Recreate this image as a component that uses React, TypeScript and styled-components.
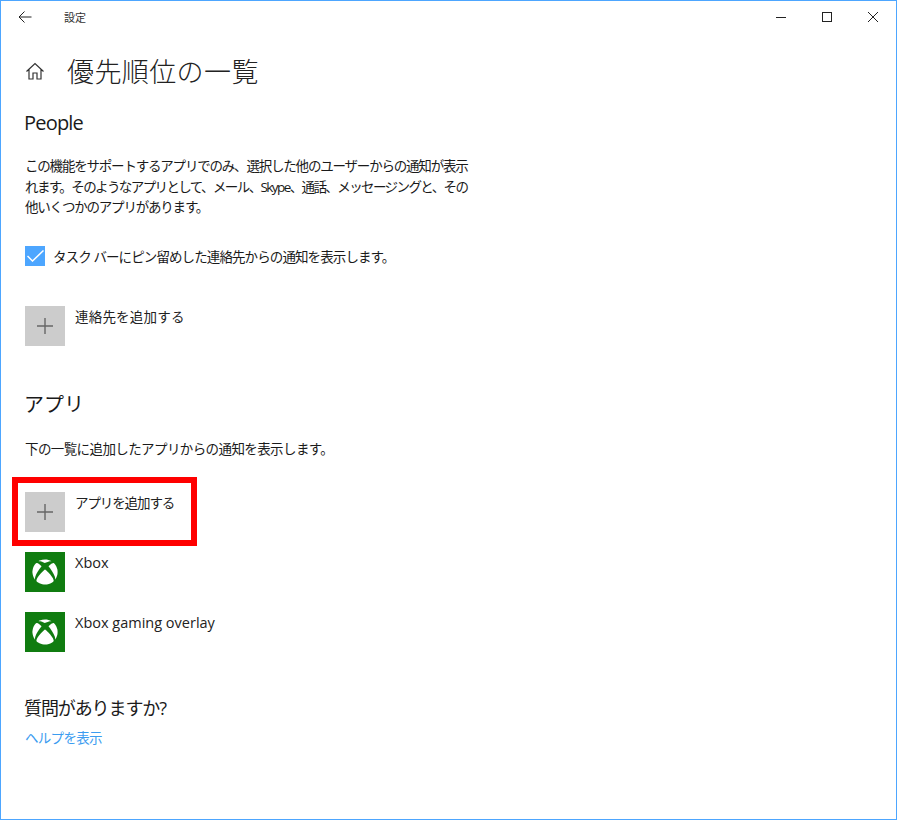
import React from "react";
import styled, {createGlobalStyle} from "styled-components";
import {FaXbox} from "react-icons/fa";

const GlobalStyle = createGlobalStyle`
  html, body {
    margin: 0;
    padding: 0;
    background: #fff;
  }
  body {
    font-family: "Open Sans", "Noto Sans CJK JP", sans-serif;
    color: #1a1a1a;
  }
`
const Window = styled.div`
  box-sizing: border-box;
  width: 897px;
  height: 820px;
  border: 1px solid #4da6ff;
  overflow: hidden;
  display: flex;
  flex-direction: column;
`
const TitleBar = styled.div`
  height: 31px;
  display: flex;
  align-items: center;
  flex-shrink: 0;
`
const BackButton = styled.div`
  width: 48px;
  display: flex;
  justify-content: center;
`
const TitleText = styled.span`
  margin-left: 15px;
  font-size: 11px;
  color: #333;
`
const WindowControls = styled.div`
  margin-left: auto;
  display: flex;
  align-items: center;
`
const ControlButton = styled.div`
  width: 46px;
  display: flex;
  justify-content: center;
  align-items: center;
`
const Content = styled.div`
  padding: 0 0 0 24px;
  display: flex;
  flex-direction: column;
`
const PageHeader = styled.div`
  display: flex;
  align-items: center;
  margin-top: 17px;
  height: 44px;
`
const PageTitle = styled.h1`
  margin: -2px 0 0 22px;
  font-size: 27px;
  font-weight: 300;
  color: #222;
  font-family: "Noto Sans CJK JP", sans-serif;
  letter-spacing: 0.4px;
`
const SectionTitle = styled.h2<{$top: number; $size?: number; $spacing?: number}>`
  margin: ${p => p.$top}px 0 0 -1px;
  font-size: ${p => p.$size ?? 20}px;
  letter-spacing: ${p => p.$spacing ?? 0}px;
  line-height: 28px;
  font-weight: 400;
  color: #1a1a1a;
`
const Description = styled.div<{$top: number}>`
  margin-top: ${p => p.$top}px;
  white-space: nowrap;
  font-size: 13.5px;
  line-height: 20.5px;
  color: #1a1a1a;
`
const DescriptionLine = styled.div<{$spacing: number}>`
  letter-spacing: ${p => p.$spacing}px;
`
const CheckRow = styled.label`
  margin-top: 28px;
  display: flex;
  align-items: center;
  gap: 8px;
  font-size: 13.5px;
  letter-spacing: -0.9px;
  height: 20px;
`
const CheckBox = styled.span`
  width: 20px;
  height: 20px;
  background: #4da6ff;
  display: flex;
  align-items: center;
  justify-content: center;
`
const ItemRow = styled.div<{$top: number}>`
  position: relative;
  margin-top: ${p => p.$top}px;
  display: flex;
  gap: 10px;
  height: 40px;
`
const Tile = styled.div<{$bg: string}>`
  width: 40px;
  height: 40px;
  background: ${p => p.$bg};
  display: flex;
  align-items: center;
  justify-content: center;
`
const ItemLabel = styled.span<{$size?: number; $spacing?: number}>`
  font-size: ${p => p.$size ?? 13.5}px;
  letter-spacing: ${p => p.$spacing ?? 0}px;
  line-height: 20px;
  margin-top: 1px;
  color: #222;
`
const Highlight = styled.div`
  position: absolute;
  left: -13px;
  top: -15px;
  width: 185px;
  height: 69px;
  box-sizing: border-box;
  border: 6px solid #ff0000;
`
const HelpLink = styled.a`
  margin-top: 6px;
  font-size: 13.5px;
  letter-spacing: -0.7px;
  line-height: 20px;
  color: #3b9cf0;
  text-decoration: none;
`

const PlusIcon = () => (
    <svg width="18" height="18" viewBox="0 0 18 18">
        <path d="M9 1v16M1 9h16" stroke="#666" strokeWidth="1.4" fill="none"/>
    </svg>
)

const XboxTile = () => (
    <Tile $bg="#107c10">
        <FaXbox size={26} color="#fff"/>
    </Tile>
)

export default function App() {
    return <>
        <GlobalStyle/>
        <Window>
            <TitleBar>
                <BackButton>
                    <svg width="14" height="14" viewBox="0 0 14 14">
                        <path d="M13.5 7H1M6.5 1.5L1 7l5.5 5.5" stroke="#222" strokeWidth="1" fill="none"/>
                    </svg>
                </BackButton>
                <TitleText>設定</TitleText>
                <WindowControls>
                    <ControlButton>
                        <svg width="10" height="10" viewBox="0 0 10 10">
                            <path d="M0 5.5h10" stroke="#222" strokeWidth="1"/>
                        </svg>
                    </ControlButton>
                    <ControlButton>
                        <svg width="10" height="10" viewBox="0 0 10 10">
                            <rect x=".5" y=".5" width="9" height="9" stroke="#222" fill="none"/>
                        </svg>
                    </ControlButton>
                    <ControlButton>
                        <svg width="10" height="10" viewBox="0 0 10 10">
                            <path d="M0 0l10 10M10 0L0 10" stroke="#222" strokeWidth="1"/>
                        </svg>
                    </ControlButton>
                </WindowControls>
            </TitleBar>
            <Content>
                <PageHeader>
                    <svg width="20" height="20" viewBox="0 0 20 20">
                        <path d="M1.5 10.5L10 2.5l8.500 8M4 8.500V18h4v-6h4v6h4V8.500" stroke="#333" strokeWidth="1.200" fill="none"/>
                    </svg>
                    <PageTitle>優先順位の一覧</PageTitle>
                </PageHeader>
                <SectionTitle $top={16} $spacing={-0.8}>People</SectionTitle>
                <Description $top={19}>
                    <DescriptionLine $spacing={-1.2}>この機能をサポートするアプリでのみ、選択した他のユーザーからの通知が表示</DescriptionLine>
                    <DescriptionLine $spacing={-1.6}>れます。そのようなアプリとして、メール、Skype、通話、メッセージングと、その</DescriptionLine>
                    <DescriptionLine $spacing={-1.2}>他いくつかのアプリがあります。</DescriptionLine>
                </Description>
                <CheckRow>
                    <CheckBox>
                        <svg width="17" height="12" viewBox="0 0 17 12">
                            <path d="M.5 6l5 5L16.500 .5" stroke="#fff" strokeWidth="1.500" fill="none"/>
                        </svg>
                    </CheckBox>
                    タスク バーにピン留めした連絡先からの通知を表示します。
                </CheckRow>
                <ItemRow $top={40}>
                    <Tile $bg="#cccccc"><PlusIcon/></Tile>
                    <ItemLabel $spacing={0.2}>連絡先を追加する</ItemLabel>
                </ItemRow>
                <SectionTitle $top={45}>アプリ</SectionTitle>
                <Description $top={20}>
                    <DescriptionLine $spacing={-0.6}>下の一覧に追加したアプリからの通知を表示します。</DescriptionLine>
                </Description>
                <ItemRow $top={33}>
                    <Tile $bg="#cccccc"><PlusIcon/></Tile>
                    <ItemLabel $spacing={-1.1}>アプリを追加する</ItemLabel>
                    <Highlight/>
                </ItemRow>
                <ItemRow $top={20}>
                    <XboxTile/>
                    <ItemLabel $size={14.5}>Xbox</ItemLabel>
                </ItemRow>
                <ItemRow $top={20}>
                    <XboxTile/>
                    <ItemLabel $size={14.5}>Xbox gaming overlay</ItemLabel>
                </ItemRow>
                <SectionTitle $top={42} $size={18} $spacing={-1.1}>質問がありますか?</SectionTitle>
                <HelpLink>ヘルプを表示</HelpLink>
            </Content>
        </Window>
    </>
}
